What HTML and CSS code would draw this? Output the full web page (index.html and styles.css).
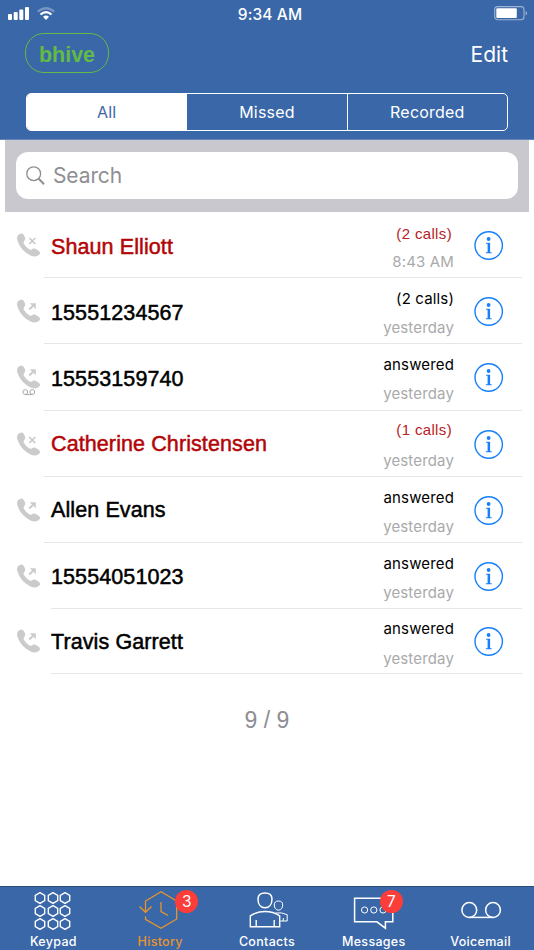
FILE: index.html
```html
<!DOCTYPE html>
<html lang="en">
<head>
  <meta charset="UTF-8">
  <meta name="viewport" content="width=device-width, initial-scale=1.0">
  <title>History</title>
  <link rel="stylesheet" href="styles.css">
</head>
<body>
  <!-- Shared icons -->
  <svg class="symbols">
    <symbol id="phone" viewBox="0 0 24 24">
      <path d="M1.200 2Q4.500-1 6.600 1.800Q8.800 5 8 6.700L6.800 8.700Q6.200 9.700 7 11Q9 14.500 12.500 16.500Q14 17.200 15 16.200Q16.500 15 18.500 15.800L22 18Q24 20 22 21.800Q19 25 13.500 22.500Q4 17.500 1 9Q-1 4.500 1.200 2Z" fill="#cbcbcb"/>
    </symbol>
    <symbol id="missed" viewBox="0 0 24 24">
      <use href="#phone"/>
      <path d="M12.300 5l6 6M18.300 5l-6 6" stroke="#c6c6c6" stroke-width="1.500"/>
    </symbol>
    <symbol id="outgoing" viewBox="0 0 24 24">
      <use href="#phone"/>
      <path d="M12.300 10.500l5-5" stroke="#cbcbcb" stroke-width="1.900"/>
      <path d="M12.800 4.200h6v6l-2-2v-2h-2z" fill="#cbcbcb"/>
    </symbol>
    <symbol id="info" viewBox="0 0 30 30">
      <circle cx="14.700" cy="15.500" r="13.700" fill="none" stroke="#1780fa" stroke-width="1.400"/>
      <circle cx="14.600" cy="9" r="1.900" fill="#1780fa"/>
      <path d="M12.100 12.700h4v9.500h1.600v1h-5.800v-1h1.700v-8.500h-1.500z" fill="#1780fa"/>
    </symbol>
    <symbol id="hex" viewBox="0 0 12 12">
      <path d="M6 .6l4.700 2.700v5.400L6 11.400 1.300 8.700V3.300z" fill="none" stroke="#fff" stroke-width="1.400"/>
    </symbol>
  </svg>

  <div class="app">
    <header class="header">
      <div class="status-bar">
        <div class="signal">
          <svg width="48" height="16" viewBox="0 0 48 16">
            <g fill="#fff">
              <rect x="0" y="9" width="4" height="6" rx="1"/>
              <rect x="5.700" y="7" width="4" height="8" rx="1"/>
              <rect x="11.300" y="4.500" width="4" height="10.500" rx="1"/>
              <rect x="17" y="2" width="4" height="13" rx="1"/>
            </g>
            <g fill="none" stroke="#fff" stroke-width="2.300">
              <path d="M29.700 6.700Q38-.3 46.300 6.700" opacity=".3"/>
              <path d="M32.500 9.500Q38 4.700 43.500 9.500"/>
            </g>
            <path d="M35 11.800Q38 9.300 41 11.800L38 15z" fill="#fff"/>
          </svg>
        </div>
        <div class="clock">9:34 AM</div>
        <div class="battery">
          <svg width="34" height="16" viewBox="0 0 34 16">
            <rect x=".7" y="1.600" width="29.300" height="13.200" rx="3" fill="none" stroke="#fff" stroke-width="1.100" opacity=".5"/>
            <rect x="2.300" y="3.300" width="20.500" height="9.800" rx="1" fill="#fff"/>
            <path d="M31.700 6v4.500q1.300-.6 1.300-2.200t-1.300-2.300z" fill="#fff" opacity=".55"/>
          </svg>
        </div>
      </div>
      <div class="nav-row">
        <div class="brand">bhive</div>
        <div class="edit">Edit</div>
      </div>
      <div class="tabs">
        <div class="tab active">All</div>
        <div class="tab">Missed</div>
        <div class="tab">Recorded</div>
      </div>
    </header>

    <div class="search-bar">
      <div class="search-field">
        <svg width="20" height="20" viewBox="0 0 20 20" fill="none" stroke="#8e8e93">
          <circle cx="7.700" cy="7.700" r="6.900" stroke-width="1.300"/>
          <path d="M12.500 12.500l5.500 5.700" stroke-width="2"/>
        </svg>
        <span>Search</span>
      </div>
    </div>

    <main class="calls">
      <div class="call missed first">
        <div class="call-icon"><svg><use href="#missed"/></svg></div>
        <div class="call-body">
          <div class="name">Shaun Elliott</div>
          <div class="details"><p class="state">(2 calls)</p><p class="time">8:43 AM</p></div>
          <svg class="info"><use href="#info"/></svg>
        </div>
      </div>
      <div class="call">
        <div class="call-icon"><svg><use href="#outgoing"/></svg></div>
        <div class="call-body">
          <div class="name">15551234567</div>
          <div class="details"><p class="state">(2 calls)</p><p class="time">yesterday</p></div>
          <svg class="info"><use href="#info"/></svg>
        </div>
      </div>
      <div class="call">
        <div class="call-icon">
          <svg><use href="#outgoing"/></svg>
          <svg class="tape" viewBox="0 0 14 7" fill="none" stroke="#aaa" stroke-width="1">
            <circle cx="3.300" cy="3" r="2.400"/><circle cx="10.300" cy="3" r="2.400"/><path d="M3 5.600h7.600"/>
          </svg>
        </div>
        <div class="call-body">
          <div class="name">15553159740</div>
          <div class="details"><p class="state">answered</p><p class="time">yesterday</p></div>
          <svg class="info"><use href="#info"/></svg>
        </div>
      </div>
      <div class="call missed raised">
        <div class="call-icon"><svg><use href="#missed"/></svg></div>
        <div class="call-body">
          <div class="name">Catherine Christensen</div>
          <div class="details"><p class="state">(1 calls)</p><p class="time">yesterday</p></div>
          <svg class="info"><use href="#info"/></svg>
        </div>
      </div>
      <div class="call raised">
        <div class="call-icon"><svg><use href="#outgoing"/></svg></div>
        <div class="call-body">
          <div class="name">Allen Evans</div>
          <div class="details"><p class="state">answered</p><p class="time">yesterday</p></div>
          <svg class="info"><use href="#info"/></svg>
        </div>
      </div>
      <div class="call raised">
        <div class="call-icon"><svg><use href="#outgoing"/></svg></div>
        <div class="call-body short">
          <div class="name">15554051023</div>
          <div class="details"><p class="state">answered</p><p class="time">yesterday</p></div>
          <svg class="info"><use href="#info"/></svg>
        </div>
      </div>
      <div class="call last">
        <div class="call-icon"><svg><use href="#outgoing"/></svg></div>
        <div class="call-body short">
          <div class="name">Travis Garrett</div>
          <div class="details"><p class="state">answered</p><p class="time">yesterday</p></div>
          <svg class="info"><use href="#info"/></svg>
        </div>
      </div>
      <div class="count">9 / 9</div>
    </main>

    <footer class="tab-bar">
      <div class="item">
        <div class="icon">
          <div class="keypad">
            <svg><use href="#hex"/></svg><svg><use href="#hex"/></svg><svg><use href="#hex"/></svg>
            <svg><use href="#hex"/></svg><svg><use href="#hex"/></svg><svg><use href="#hex"/></svg>
            <svg><use href="#hex"/></svg><svg><use href="#hex"/></svg><svg><use href="#hex"/></svg>
          </div>
        </div>
        <div class="label">Keypad</div>
      </div>
      <div class="item current">
        <div class="icon">
          <svg width="40" height="40" viewBox="0 0 40 40" fill="none" stroke="#e8942d" stroke-width="1.300">
            <path d="M5.500 22V11L21 1.700 36.700 11v18L21 38.300 5.500 29.300V26.500"/>
            <path d="M-.5 16.500l6 5.800 6-5.800M21 12v9.500l7 4"/>
          </svg>
          <span class="badge">3</span>
        </div>
        <div class="label">History</div>
      </div>
      <div class="item">
        <div class="icon">
          <svg width="40" height="40" viewBox="0 0 40 40" fill="none" stroke="#fff">
            <path d="M18 3C23 3 25 5 25 9C25 14.500 22 17.800 18 17.800S11 14.500 11 9C11 5 13 3 18 3Z" stroke-width="1.500"/>
            <path d="M3.300 36.700V25.800Q10 21.500 18 21.500t14.700 4.300v10.900zM9.200 36v-6M27.200 36v-6" stroke-width="1.400"/>
            <path d="M31.500 11c2.800 0 4.200 1.300 4.200 4s-1.600 5.200-4.200 5.200-4.200-2.500-4.200-5.200 1.400-4 4.200-4zM28.500 23q6-1 11.700 1.700V31h-7M36.300 31v-3" stroke-width="1"/>
          </svg>
        </div>
        <div class="label">Contacts</div>
      </div>
      <div class="item">
        <div class="icon">
          <svg width="40" height="40" viewBox="0 0 40 40" fill="none" stroke="#fff">
            <path d="M.6 8.300h38.200v23.500h-7.400v6.400l-8.500-6.400H.6z" stroke-width="1.500"/>
            <g stroke-width="1"><circle cx="10.600" cy="20" r="3.100"/><circle cx="19.800" cy="20" r="3.100"/><circle cx="29" cy="20" r="3.100"/></g>
          </svg>
          <span class="badge">7</span>
        </div>
        <div class="label">Messages</div>
      </div>
      <div class="item">
        <div class="icon">
          <svg width="40" height="40" viewBox="0 0 40 40" fill="none" stroke="#fff" stroke-width="1.500">
            <circle cx="8.300" cy="20" r="7.400"/><circle cx="32" cy="20" r="7.400"/><path d="M8.300 27.400H32"/>
          </svg>
        </div>
        <div class="label">Voicemail</div>
      </div>
    </footer>
  </div>
</body>
</html>
```
FILE: styles.css
```css
* {
  box-sizing: border-box;
}

body {
  margin: 0;
  background: #fff;
  font-family: Inter, "Liberation Sans", sans-serif;
}

.symbols {
  display: none;
}

.app {
  display: flex;
  flex-direction: column;
  width: 534px;
  height: 950px;
  overflow: hidden;
}

.header {
  height: 140px;
  background: #3a67a8;
  border-bottom: 1px solid #6487bb;
  color: #fff;
}

.status-bar {
  display: grid;
  grid-template-columns: 1fr auto 1fr;
  height: 27px;
  padding: 5px 6px 0 8px;
}

.clock {
  padding-left: 4px;
  font-size: 15.5px;
  font-weight: 500;
  line-height: 19px;
  letter-spacing: 0.1px;
}

.battery {
  text-align: right;
}

.nav-row {
  display: flex;
  justify-content: space-between;
  padding: 6px 26px 0 25px;
}

.brand {
  width: 84px;
  height: 40px;
  border: 1.4px solid #62bb46;
  border-radius: 19px;
  color: #62bb46;
  font: bold 21.5px/42px "Liberation Sans", sans-serif;
  text-align: center;
}

.edit {
  font-size: 21px;
  line-height: 44px;
}

.tabs {
  display: flex;
  width: 482px;
  height: 38px;
  margin: 16px 0 0 26px;
  border: 1.4px solid #fff;
  border-radius: 5px;
  overflow: hidden;
}

.tab {
  flex: 1;
  font-size: 16px;
  line-height: 36px;
  letter-spacing: 0.2px;
  text-align: center;
}

.tab + .tab {
  border-left: 1px solid #fff;
}

.tab.active {
  background: #fff;
  color: #3a67a8;
}

.search-bar {
  height: 72px;
  margin: 0 5px;
  padding: 12px 11px 0;
  background: #c9c8ce;
}

.search-field {
  display: flex;
  align-items: center;
  gap: 7px;
  height: 47px;
  padding-left: 10px;
  border-radius: 12px;
  background: #fff;
  color: #8e8e93;
  font-size: 21px;
  letter-spacing: -0.1px;
}

.calls {
  flex: 1;
}

.call {
  display: flex;
  height: 66.2px;
}

.call-icon {
  display: flex;
  flex-direction: column;
  align-items: center;
  width: 44px;
  padding: 21px 0 0 13px;
}

.call-icon svg {
  flex: none;
  width: 24px;
  height: 24px;
}

.call-icon .tape {
  width: 14px;
  height: 7px;
}

.call-body {
  display: flex;
  width: 478px;
  padding-left: 7px;
  border-bottom: 1px solid #e6e6e7;
}

.call-body.short {
  width: 471px;
  margin-left: 7px;
  padding-left: 0;
}

.name {
  flex: 1;
  padding-top: 22px;
  font: 21.5px/26px "Liberation Sans", sans-serif;
  letter-spacing: 0.1px;
  -webkit-text-stroke: 0.5px;
}

.missed .name {
  color: #b30507;
}

.raised .name {
  padding-top: 20.7px;
}

.details {
  font-size: 15px;
  letter-spacing: 0.15px;
  text-align: right;
}

.details p {
  margin: 0;
  line-height: 20px;
}

.details .state {
  padding-top: 11px;
  height: 31px;
}

.missed .state {
  padding-right: 2px;
  color: #b82025;
  font-family: "Liberation Sans", sans-serif;
  letter-spacing: 0.35px;
}

.details .time {
  padding-top: 9px;
  color: #aaaaab;
}

.first .details .state {
  padding-top: 12px;
}

.raised.missed .details .state {
  padding-top: 9.5px;
}

.last .details .state {
  padding-top: 10px;
}

.info {
  width: 30px;
  height: 30px;
  margin: 18px 18px 0 20px;
}

.last {
  height: 65px;
}

.last .name,
.last .call-icon {
  padding-top: 20px;
}

.last .info {
  margin-top: 17px;
}

.count {
  padding-top: 31px;
  color: #8e8e93;
  font: 23px/30px "Liberation Sans", sans-serif;
  text-align: center;
}

.tab-bar {
  display: grid;
  grid-template-columns: repeat(5, 1fr);
  height: 64px;
  border-top: 1.5px solid #2b4d78;
  background: #3a67a8;
  color: #fff;
}

.item {
  display: flex;
  flex-direction: column;
  align-items: center;
}

.icon {
  position: relative;
  width: 40px;
  height: 43px;
  padding-top: 3px;
}

.icon svg {
  overflow: visible;
}

.keypad {
  display: grid;
  grid-template-columns: repeat(3, 12px);
  column-gap: 0.5px;
  row-gap: 1px;
  margin: 2px 0 0 1px;
}

.keypad svg {
  width: 12px;
  height: 12px;
}

.badge {
  position: absolute;
  top: 3px;
  left: 35px;
  width: 23px;
  height: 23px;
  border-radius: 50%;
  background: #fc3d39;
  color: #fff;
  font-size: 15.5px;
  line-height: 23px;
  text-align: center;
}

.item:nth-child(4) .badge {
  left: 26px;
}

.label {
  padding-top: 2px;
  font-size: 12.5px;
  font-weight: 500;
  line-height: 19px;
  letter-spacing: 0.3px;
}

.current .label {
  color: #e8942d;
}
```
